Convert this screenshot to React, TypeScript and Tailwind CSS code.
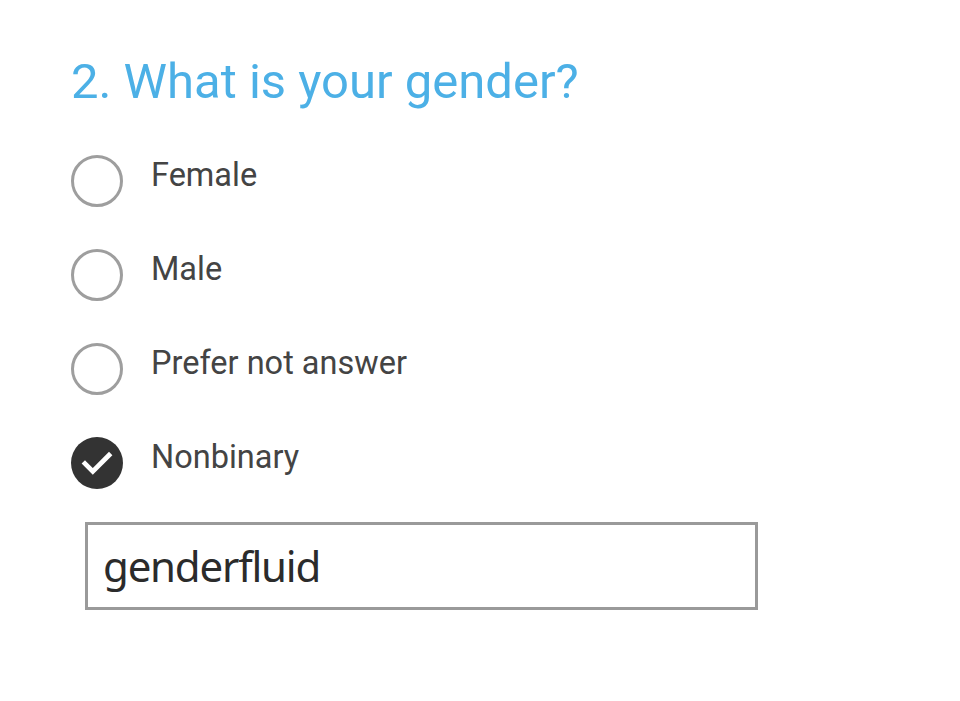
import React, { useState } from 'react';

const options = ['Female', 'Male', 'Prefer not answer', 'Nonbinary'];

const RadioMark = ({ checked }: { checked: boolean }) =>
  checked ? (
    <span className="flex h-[52px] w-[52px] shrink-0 items-center justify-center rounded-full bg-[#333333]">
      <svg width="36" height="36" viewBox="0 0 30 30" fill="none">
        <path d="M5 15.5 L11.5 22 L25 8.5" stroke="#ffffff" strokeWidth="4" strokeLinecap="square" />
      </svg>
    </span>
  ) : (
    <span className="h-[52px] w-[52px] shrink-0 rounded-full border-[3px] border-[#9e9e9e]" />
  );

const App: React.FC = () => {
  const [selected, setSelected] = useState('Nonbinary');
  const [other, setOther] = useState('genderfluid');

  return (
    <div className="min-h-screen w-full bg-white pl-[71px] pt-[52px] font-['Roboto',sans-serif]">
      <h1 className="text-[49px] leading-[60px] text-[#4cb0e6]">2. What is your gender?</h1>
      <div className="mt-[43px] flex flex-col gap-[42px]">
        {options.map((opt) => (
          <button
            key={opt}
            onClick={() => setSelected(opt)}
            className="flex h-[52px] items-center gap-[28px] text-left"
          >
            <RadioMark checked={selected === opt} />
            <span className="-mt-[13px] text-[32.5px] leading-[40px] text-[#444444]">{opt}</span>
          </button>
        ))}
      </div>
      <input
        value={other}
        onChange={(e) => setOther(e.target.value)}
        className="ml-[14px] mt-[33px] h-[88px] w-[673px] border-[3px] border-[#9a9a9a] px-[15px] pb-[2px] font-['Noto_Sans',sans-serif] text-[42px] tracking-[-1.2px] text-[#2b2b2b] outline-none"
      />
    </div>
  );
};

export default App;
